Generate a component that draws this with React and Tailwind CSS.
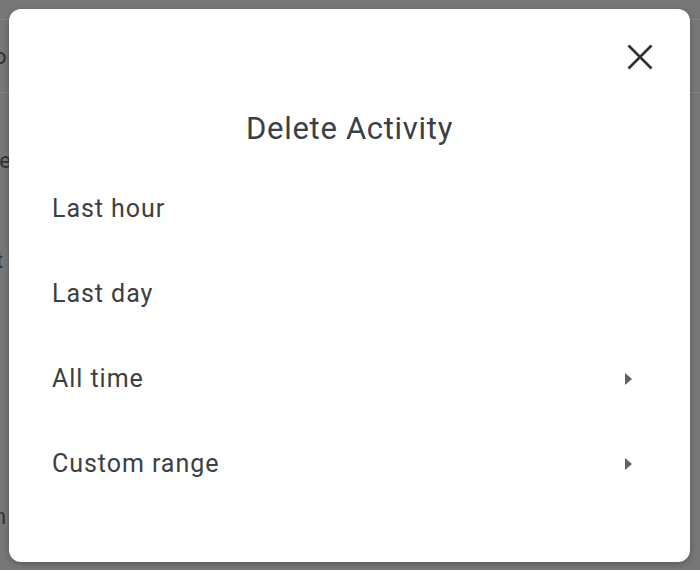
const options = [
  { label: "Last hour", more: false },
  { label: "Last day", more: false },
  { label: "All time", more: true },
  { label: "Custom range", more: true },
];

const Arrow = () => (
  <svg width="9" height="14" viewBox="0 0 9 14" className="text-[#5f6368]">
    <path d="M1 1 L8 7 L1 13 Z" fill="currentColor" />
  </svg>
);

const Close = () => (
  <svg width="26" height="26" viewBox="0 0 26 26" className="text-[#2f3033]">
    <path d="M1.5 1.5 L24.5 24.5 M24.5 1.5 L1.5 24.5" stroke="currentColor" strokeWidth="2.6" />
  </svg>
);

const App = () => {
  return (
    <div
      className="relative h-[570px] w-[700px] overflow-hidden bg-[#777777]"
      style={{ fontFamily: "Roboto, 'Noto Sans', sans-serif" }}
    >
      {/* page behind the overlay */}
      <div className="flex flex-col text-[22px] text-[#333333]">
        <div className="h-[20px] border-b border-[#858585]" />
        <div className="flex h-[73px] items-center border-b border-[#858585]">
          <span className="-ml-[6px]">o</span>
        </div>
        <div className="flex h-[134px] items-center">
          <span className="-ml-[8px]">re</span>
        </div>
        <div className="flex h-[66px] items-center">
          <span className="-ml-[4px]">t</span>
        </div>
        <div className="flex h-[250px] items-end pb-[10px]">
          <span className="-ml-[6px]">n</span>
        </div>
      </div>

      <div className="absolute left-[9px] top-[9px] flex h-[553px] w-[681px] flex-col rounded-[12px] bg-white shadow-[0_2px_6px_rgba(0,0,0,0.25)]">
        <div className="flex justify-end pr-[37px] pt-[35px]">
          <button type="button" className="flex h-[26px] w-[26px] items-center justify-center">
            <Close />
          </button>
        </div>

        <h2 className="mt-[39px] text-center text-[31px] leading-[40px] font-normal tracking-[0.7px] text-[#3c4043]">
          Delete Activity
        </h2>

        <ul className="mt-[17px] flex flex-col">
          {options.map((option) => (
            <li
              key={option.label}
              className="flex h-[85px] items-center justify-between pl-[43px] pr-[57px] text-[25px] tracking-[0.95px] text-[#3c4043]"
            >
              <span>{option.label}</span>
              {option.more && <Arrow />}
            </li>
          ))}
        </ul>
      </div>
    </div>
  );
};

export default App;
